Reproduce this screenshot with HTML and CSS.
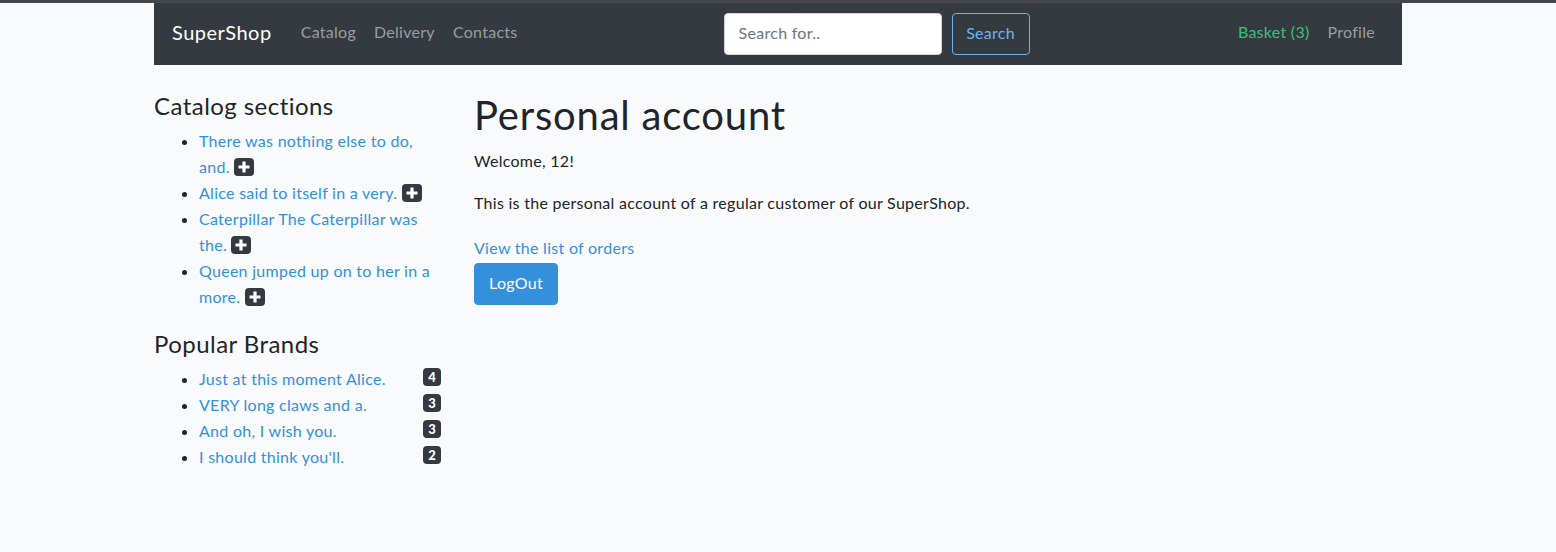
FILE: index.html
```html
<!DOCTYPE html>
<html lang="en">
<head>
<meta charset="utf-8">
<title>SuperShop - Personal account</title>
<link rel="stylesheet" href="styles.css">
</head>
<body>
<div class="topstrip"></div>
<div class="container">
  <nav class="navbar">
    <a class="brand" href="#">SuperShop</a>
    <ul class="nav">
      <li><a class="nav-link" href="#">Catalog</a></li>
      <li><a class="nav-link" href="#">Delivery</a></li>
      <li><a class="nav-link" href="#">Contacts</a></li>
    </ul>
    <form class="search">
      <input class="search-input" type="text" placeholder="Search for..">
      <button class="search-btn" type="button">Search</button>
    </form>
    <ul class="nav nav-right">
      <li><a class="nav-link basket" href="#">Basket (3)</a></li>
      <li><a class="nav-link" href="#">Profile</a></li>
    </ul>
  </nav>
</div>
<main class="container main">
  <aside class="sidebar">
    <h4 class="side-title">Catalog sections</h4>
    <ul class="side-list">
      <li><a href="#">There was nothing else to do, and.</a> <span class="plus"><svg viewBox="0 0 20 18" width="20" height="18"><path d="M10 3.5v11M4.5 9h11" stroke="#fff" stroke-width="3.2"/></svg></span></li>
      <li><a href="#">Alice said to itself in a very.</a> <span class="plus"><svg viewBox="0 0 20 18" width="20" height="18"><path d="M10 3.5v11M4.5 9h11" stroke="#fff" stroke-width="3.2"/></svg></span></li>
      <li><a href="#">Caterpillar The Caterpillar was the.</a> <span class="plus"><svg viewBox="0 0 20 18" width="20" height="18"><path d="M10 3.5v11M4.5 9h11" stroke="#fff" stroke-width="3.2"/></svg></span></li>
      <li><a href="#">Queen jumped up on to her in a more.</a> <span class="plus"><svg viewBox="0 0 20 18" width="20" height="18"><path d="M10 3.5v11M4.5 9h11" stroke="#fff" stroke-width="3.2"/></svg></span></li>
    </ul>
    <h4 class="side-title">Popular Brands</h4>
    <ul class="side-list brands">
      <li><a href="#">Just at this moment Alice.</a><span class="count">4</span></li>
      <li><a href="#">VERY long claws and a.</a><span class="count">3</span></li>
      <li><a href="#">And oh, I wish you.</a><span class="count">3</span></li>
      <li><a href="#">I should think you'll.</a><span class="count">2</span></li>
    </ul>
  </aside>
  <section class="content">
    <h1 class="page-title">Personal account</h1>
    <p>Welcome, 12!</p>
    <p>This is the personal account of a regular customer of our SuperShop.</p>
    <a class="orders-link" href="#">View the list of orders</a>
    <button class="btn-primary" type="button">LogOut</button>
  </section>
</main>
</body>
</html>
```
FILE: styles.css
```css
html, body {
  margin: 0;
  padding: 0;
}
body {
  background: #f8fafc;
  font-family: "Lato", "Noto Sans", sans-serif;
  font-size: 16px;
  line-height: 26px;
  letter-spacing: 0.28px;
  color: #212529;
}
a {
  color: #3490dc;
  text-decoration: none;
}
.topstrip {
  height: 3px;
  background: #45464e;
}
.container {
  width: 1248px;
  margin: 0 auto;
}
.navbar {
  height: 62px;
  background: #343a40;
  display: flex;
  align-items: center;
  padding: 0 18px 4px;
  box-sizing: border-box;
}
.brand {
  color: #fff;
  font-size: 20px;
  letter-spacing: 0.5px;
  margin-right: 20px;
}
.nav {
  display: flex;
  list-style: none;
  margin: 0;
  padding: 0;
}
.nav-link {
  display: block;
  padding: 0 9px;
  color: rgba(255, 255, 255, 0.5);
}
.search {
  display: flex;
  gap: 10px;
  margin-left: 197px;
  margin-right: auto;
  transform: translateY(2px);
}
.search-input {
  width: 218px;
  height: 42px;
  box-sizing: border-box;
  border: 1px solid #ced4da;
  border-radius: 4px;
  padding: 0 14px 3px;
  font-family: inherit;
  font-size: 16px;
  letter-spacing: 0.28px;
  color: #495057;
  background: #fff;
}
.search-input::placeholder {
  color: #6c757d;
}
.search-btn {
  height: 42px;
  width: 78px;
  box-sizing: border-box;
  background: transparent;
  border: 1px solid #6cb2eb;
  border-radius: 4px;
  color: #6cb2eb;
  font-family: inherit;
  font-size: 16px;
  letter-spacing: 0.28px;
  padding: 0 0 3px;
}
.nav-right .nav-link.basket {
  color: #38c172;
}
.main {
  display: grid;
  grid-template-columns: 287px 1fr;
  column-gap: 33px;
  padding-top: 26px;
}
.side-title {
  margin: 0 0 8px;
  font-size: 24px;
  line-height: 29px;
  font-weight: 400;
  letter-spacing: 0.45px;
}
.side-list {
  margin: 0 0 19px;
  padding-left: 45px;
}
.plus {
  display: inline-flex;
  vertical-align: -3px;
  width: 20px;
  height: 18px;
  background: #343a40;
  border-radius: 4px;
}
.brands li {
  position: relative;
}
.count {
  position: absolute;
  right: 0;
  top: 2px;
  width: 18px;
  height: 18px;
  background: #343a40;
  border-radius: 4px;
  color: #fff;
  font-size: 13px;
  font-weight: 900;
  line-height: 18px;
  text-align: center;
  letter-spacing: 0;
}
.page-title {
  margin: 0 0 9px;
  font-size: 40px;
  line-height: 48px;
  font-weight: 400;
  letter-spacing: 0.8px;
}
.content p {
  margin: 0 0 16px;
}
.orders-link {
  display: block;
  margin-top: 19px;
  margin-bottom: 2px;
}
.btn-primary {
  display: block;
  background: #3490dc;
  color: #fff;
  border: 1px solid #3490dc;
  border-radius: 4px;
  height: 42px;
  padding: 0 14px 3px;
  font-family: inherit;
  font-size: 16px;
  letter-spacing: 0.28px;
}
```
